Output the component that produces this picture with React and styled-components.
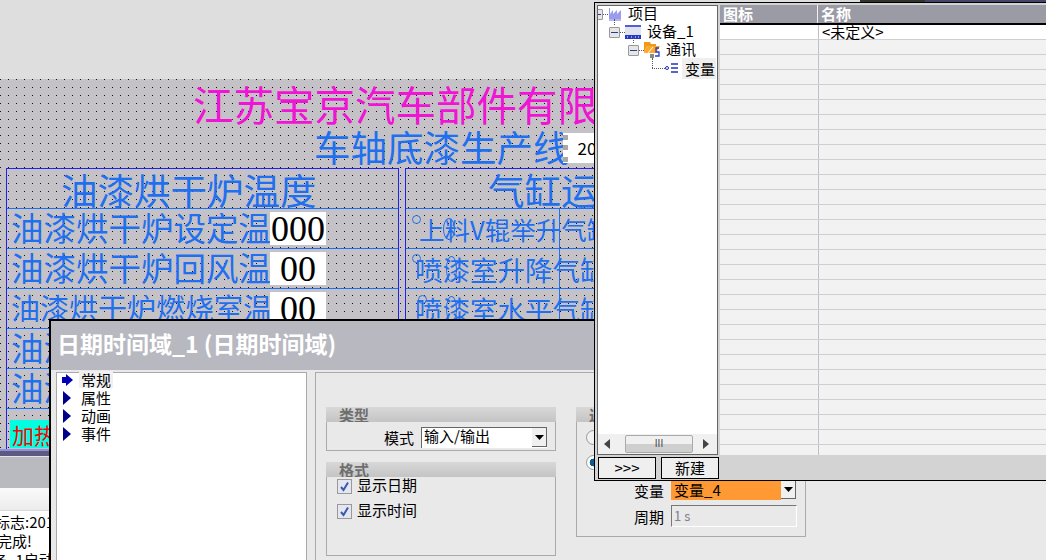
import React from 'react';
import styled, { createGlobalStyle } from 'styled-components';

const GlobalStyle = createGlobalStyle`
  html, body {
    margin: 0;
    padding: 0;
    background: #dedede;
  }
  body {
    font-family: "Noto Sans CJK SC", "Liberation Sans", sans-serif;
  }
`;

const Desktop = styled.div`
  position: relative;
  width: 1046px;
  height: 560px;
  overflow: hidden;
  background: #dedede;
`;

const TopArea = styled.div`
  height: 79px;
  background: #dedede;
`;

/* HMI screen behind the dialogs */
const Canvas = styled.div`
  height: 370px;
  overflow: hidden;
  background-color: #c4c2c6;
  background-image: radial-gradient(circle at 0.5px 0.5px, #111 0.5px, transparent 0.65px);
  background-size: 8px 8px;
`;

const CompanyTitle = styled.div`
  height: 49px;
  padding-left: 193px;
  font-size: 40.5px;
  line-height: 50px;
  color: #f014d4;
  white-space: nowrap;
`;

const LineTitle = styled.div`
  display: flex;
  align-items: center;
  height: 40px;
  padding-left: 314px;
  font-size: 36.5px;
  color: #1f6fee;
  white-space: nowrap;
`;

const LineName = styled.span`
  margin-top: -4px;
`;

const DateBox = styled.div`
  position: relative;
  width: 70px;
  height: 30px;
  margin-left: -7px;
  padding-left: 15px;
  background: #fff;
  color: #000;
  font-size: 17px;
  line-height: 30px;
`;

const Handle = styled.span`
  position: absolute;
  left: 0;
  top: ${(props) => props.top}px;
  width: 5px;
  height: 5px;
  background: #a8a8a8;
`;

const Tables = styled.div`
  display: flex;
  gap: 6px;
  padding-left: 6px;
`;

const HmiTable = styled.div`
  position: relative;
  flex: none;
  width: ${(props) => props.width}px;
  height: 282px;
  border: 1px solid #2222ee;
  border-bottom: none;
`;

const TableHead = styled.div`
  height: 39px;
  padding-left: ${(props) => props.indent}px;
  font-size: 36.5px;
  line-height: 42px;
  color: #1f6fee;
  white-space: nowrap;
  overflow: hidden;
`;

const Row = styled.div`
  position: relative;
  display: flex;
  align-items: center;
  height: 39px;
  border-top: 1px solid #1f6fee;
`;

const RowLabel = styled.div`
  flex: none;
  width: 259px;
  margin-left: 4px;
  overflow: hidden;
  white-space: nowrap;
  font-size: ${(props) => props.size || 32.5}px;
  line-height: 34px;
  height: 38px;
  color: #1f6fee;
`;

const ValueBox = styled.div`
  flex: none;
  width: 56px;
  height: 33px;
  padding-left: ${(props) => props.indent}px;
  box-sizing: border-box;
  background: #fff;
  color: #000;
  font-family: "Liberation Serif", serif;
  font-size: 36px;
  line-height: 35px;
`;

const HeatTag = styled.div`
  width: 60px;
  height: 28px;
  margin: 10px 0 0 3px;
  padding-left: 2px;
  background: #00ffe0;
  color: #ff0000;
  font-size: 22px;
  line-height: 28px;
  white-space: nowrap;
  overflow: hidden;
`;

const CylinderLabel = styled.div`
  margin-left: ${(props) => props.indent}px;
  font-size: ${(props) => props.size}px;
  line-height: 38px;
  color: #1f6fee;
  white-space: nowrap;
`;

const Ring = styled.span`
  position: absolute;
  left: ${(props) => props.left}px;
  top: ${(props) => props.top}px;
  width: ${(props) => props.w}px;
  height: ${(props) => props.h}px;
  box-sizing: border-box;
  border: 1px solid #1f6fee;
  border-radius: 50%;
`;

const ColumnRule = styled.span`
  position: absolute;
  left: 153px;
  top: 39px;
  bottom: 0;
  width: 1px;
  background: #1f6fee;
`;

const OutputEdge = styled.div`
  height: 8px;
  box-sizing: border-box;
  background: #5c5a80;
  border-top: 2px solid #8f92e2;
  border-bottom: 1px solid #e4e4e8;
`;

const OutputHead = styled.div`
  height: 31px;
  background: #b9b9c0;
`;

const OutputTabs = styled.div`
  height: 22px;
  background: linear-gradient(#fafafa, #ececec);
  border-bottom: 1px solid #d8d8d8;
`;

const OutputBody = styled.div`
  padding-top: 1px;
  background: #fff;
`;

const LogLine = styled.div`
  height: 19px;
  margin-left: ${(props) => props.shift}px;
  font-size: 15px;
  line-height: 20px;
  color: #000;
  white-space: nowrap;
`;

/* property dialog */
const Dialog = styled.div`
  position: absolute;
  left: 49px;
  top: 319px;
  width: 1100px;
  height: 300px;
  border: 1px solid #000;
  border-width: 2px 0 0 2px;
  background: #e9e9e9;
`;

const DialogTitle = styled.div`
  height: 49px;
  box-sizing: border-box;
  padding-left: 6px;
  background: #b8b8c0;
  color: #fff;
  font-size: 23px;
  font-weight: 700;
  line-height: 45px;
  white-space: nowrap;
`;

const DialogBody = styled.div`
  display: flex;
  gap: 8px;
  padding: 2px 0 0 5px;
`;

const NavTree = styled.div`
  flex: none;
  width: 251px;
  height: 240px;
  padding: 0 0 0 5px;
  box-sizing: border-box;
  background: #fff;
  border: 1px solid #aaa;
`;

const NavItem = styled.div`
  display: flex;
  align-items: center;
  gap: 5px;
  height: 18px;
  font-size: 15px;
  color: #000;

  &:first-child {
    margin-top: -2px;
  }
`;

const NavText = styled.span`
  padding: 0 2px;
  margin-top: -2px;
  line-height: 17px;
  background: ${(props) => (props.active ? '#f0f0f0' : 'transparent')};
`;

const PropsPanel = styled.div`
  flex: none;
  width: 800px;
  height: 240px;
  box-sizing: border-box;
  padding: 34px 0 0 10px;
  border: 1px solid #aaa;
  display: flex;
  gap: 20px;
`;

const GroupColumn = styled.div`
  display: flex;
  flex-direction: column;
  gap: 11px;
`;

const Group = styled.div`
  width: 230px;
  height: ${(props) => props.height}px;
  box-sizing: border-box;
  border: 1px solid #aaa;
  border-top: none;
`;

const GroupHead = styled.div`
  height: 15px;
  margin: 0 -1px;
  padding-left: 13px;
  background: linear-gradient(#d8d8d8, #c4c4c4);
  color: #6e6e6e;
  font-size: 15px;
  font-weight: 700;
  line-height: 16px;
  overflow: hidden;
`;

const FieldRow = styled.div`
  display: flex;
  align-items: center;
  height: 26px;
  margin-top: ${(props) => props.top || 0}px;
  font-size: 15px;
  color: #000;
`;

const FieldLabel = styled.span`
  width: 94px;
  padding-right: 7px;
  box-sizing: border-box;
  text-align: right;
`;

const RaisedCaption = styled.span`
  margin-top: -4px;
`;

const Combo = styled.div`
  display: flex;
  align-items: center;
  justify-content: space-between;
  width: ${(props) => props.width}px;
  height: 21px;
  box-sizing: border-box;
  padding-left: 2px;
  border-top: 1px solid #666;
  border-left: 1px solid #666;
  background: #fff;
  white-space: nowrap;
`;

const ComboArrow = styled.span`
  display: flex;
  align-items: center;
  justify-content: center;
  width: 15px;
  height: 19px;
  background: #f0f0f0;
  border-right: 1px solid #666;
  border-bottom: 1px solid #666;
  box-sizing: border-box;
`;

const VarField = styled.div`
  display: flex;
  width: 125px;
  height: 20px;
  line-height: 20px;
`;

const VarValue = styled.span`
  width: 110px;
  padding-left: 3px;
  box-sizing: border-box;
  background: #ff9933;
`;

const PeriodField = styled.div`
  width: 126px;
  height: 22px;
  box-sizing: border-box;
  padding-left: 2px;
  border-top: 1px solid #777;
  border-left: 1px solid #777;
  border-bottom: 1px solid #fff;
  border-right: 1px solid #fff;
  color: #80808c;
  font-size: 13px;
  line-height: 20px;
`;

const CheckList = styled.div`
  margin-top: -3px;
`;

const CheckRow = styled.div`
  display: flex;
  align-items: center;
  gap: 5px;
  height: 25px;
  padding-left: 10px;
  font-size: 15px;
`;

const CheckBox = styled.span`
  display: flex;
  align-items: center;
  justify-content: center;
  width: 15px;
  height: 15px;
  box-sizing: border-box;
  border: 1px solid #999;
  background: #e4e6f2;
`;

const RadioBlock = styled.div`
  height: 48px;
  padding: 8px 0 0 9px;
  box-sizing: border-box;
`;

const Radio = styled.span`
  display: block;
  width: 13px;
  height: 13px;
  margin-bottom: 10px;
  border: 1px solid #999;
  border-radius: 50%;
  background: ${(props) => (props.on ? 'radial-gradient(circle, #0b5a94 40%, #fff 45%)' : '#f2f2f2')};
`;

/* variable browser popup */
const Popup = styled.div`
  position: absolute;
  left: 594px;
  top: 2px;
  width: 460px;
  height: 479px;
  box-sizing: border-box;
  padding: 2px 0 0 2px;
  border: 1px solid #000;
  background: #d3d3d3;
  display: grid;
  grid-template-columns: 121px 1fr;
  grid-template-rows: 450px 1fr;
`;

const TreePane = styled.div`
  display: flex;
  flex-direction: column;
  overflow: hidden;
  border: 1px solid #666;
  background: #fff;
  grid-column: 1;
  grid-row: 1;
`;

const TreeList = styled.div`
  flex: 1;
  margin-top: -1px;
`;

const TreeRow = styled.div`
  position: relative;
  display: flex;
  align-items: center;
  gap: 5px;
  height: 18px;
  margin-left: ${(props) => props.indent}px;
  font-size: 15px;
  color: #000;
  white-space: nowrap;
`;

const Connector = styled.span`
  position: absolute;
  left: ${(props) => props.left}px;
  top: ${(props) => props.top}px;
  width: ${(props) => props.w}px;
  height: ${(props) => props.h}px;
  border-left: ${(props) => (props.h ? '1px dotted #555' : 'none')};
  border-bottom: ${(props) => (props.w ? '1px dotted #555' : 'none')};
`;

const Expander = styled.span`
  display: flex;
  align-items: center;
  justify-content: center;
  flex: none;
  width: 9px;
  height: 9px;
  border: 1px solid #999;
  border-radius: 1px;
  background: #e6e6e6;

  &::after {
    content: '';
    width: 7px;
    height: 1px;
    background: #27408b;
  }
`;

const TreeText = styled.span`
  padding: ${(props) => (props.active ? '0 1px 0 3px' : '0 1px')};
  margin-left: ${(props) => (props.active ? '-2px' : '0')};
  margin-top: ${(props) => (props.active ? '0' : '-4px')};
  background: ${(props) => (props.active ? '#efefef' : 'transparent')};
`;

const ScrollBar = styled.div`
  display: flex;
  align-items: center;
  justify-content: space-between;
  height: 20px;
  padding: 0 8px 0 6px;
  background: #f0f0f0;
`;

const ScrollThumb = styled.div`
  width: 68px;
  height: 18px;
  margin-left: 5px;
  box-sizing: border-box;
  border: 1px solid #aaa;
  border-radius: 2px;
  background: linear-gradient(#f0f0f0 50%, #cfcfcf 51%);
  color: #444;
  font-size: 10px;
  line-height: 16px;
  text-align: center;
  font-family: "Liberation Sans", sans-serif;
`;

const VarTable = styled.div`
  grid-column: 2;
  grid-row: 1;
  margin-left: 2px;
  background: #f2f2f2;
  overflow: hidden;
`;

const VarHeadRow = styled.div`
  display: grid;
  grid-template-columns: 98px 1fr;
  height: 20px;
  box-sizing: border-box;
  background: #9b9ba5;
  border-bottom: 2px solid #000;
`;

const VarHeadCell = styled.div`
  padding-left: 3px;
  color: #fff;
  font-size: 15px;
  font-weight: 700;
  line-height: 17px;
  border-right: 1px solid #f0f0f0;
`;

const VarRow = styled.div`
  display: grid;
  grid-template-columns: 98px 1fr;
  height: 15px;
  box-sizing: border-box;
  background: ${(props) => (props.first ? '#fff' : '#f2f2f2')};
  border-bottom: 1px solid #cfcfcf;
`;

const VarCell = styled.div`
  padding-left: 3px;
  font-size: 15px;
  line-height: 14px;
  white-space: nowrap;
  border-left: ${(props) => (props.second ? '1px solid #c0c0cc' : 'none')};
`;

const PopupFooter = styled.div`
  grid-column: 1 / -1;
  grid-row: 2;
  display: flex;
  gap: 5px;
  padding: 2px 0 0 1px;
`;

const PopupButton = styled.button`
  width: 58px;
  height: 22px;
  padding: 0;
  border: 1px solid #000;
  border-radius: 0;
  background: #efefef;
  color: #000;
  font-family: inherit;
  font-size: 15px;
  line-height: 18px;
`;

const TopStrip = styled.div`
  position: absolute;
  left: 860px;
  top: 0;
  display: flex;
  width: 186px;
  height: 2px;
`;

const StripPart = styled.span`
  width: ${(props) => props.width}px;
  background: ${(props) => props.color};
`;

const NavArrow = ({ active }) => (
  <svg width="12" height="14" viewBox="0 0 12 14">
    {active ? (
      <path d="M0 4h4V1l7 6-7 6v-3H0z" fill="#0000b4" />
    ) : (
      <path d="M1 0l8 7-8 7z" fill="#00008b" />
    )}
  </svg>
);

const DropTriangle = () => (
  <svg width="9" height="5" viewBox="0 0 9 5">
    <path d="M0 0h9L4.5 5z" fill="#000" />
  </svg>
);

const CheckMark = () => (
  <svg width="11" height="11" viewBox="0 0 11 11">
    <path d="M2 6l2.5 3L9 1.5" fill="none" stroke="#3c5aa8" strokeWidth="2" />
  </svg>
);

const FactoryIcon = () => (
  <svg width="14" height="14" viewBox="0 0 14 14">
    <path d="M1 1h1v6l3-4v4l4-4v4l4-4v9H1z" fill="#9a9cf0" />
    <path d="M1 13h12" stroke="#6c6ee0" />
  </svg>
);

const DeviceIcon = () => (
  <svg width="16" height="15" viewBox="0 0 16 15">
    <path d="M0 1h16" stroke="#2222cc" strokeWidth="1.5" />
    <rect x="0" y="2" width="16" height="8" fill="#dfe3ee" />
    <rect x="0" y="10" width="16" height="4" fill="#2638c8" />
    <path d="M2 12h1M6 12h1M10 12h1M13 12h1" stroke="#fff" />
  </svg>
);

const FolderIcon = () => (
  <svg width="16" height="16" viewBox="0 0 16 16">
    <path d="M0 0h6l1 2h5v2H3L0 11z" fill="#f09a1a" />
    <path d="M3 4h13l-4 7H0z" fill="#ffa828" />
    <path d="M4 11l5-6" stroke="#fff" />
    <path d="M15 6h-3v4h3v4h-4" fill="none" stroke="#2040d0" strokeWidth="1.3" />
    <rect x="6" y="12" width="4" height="4" fill="#888" />
  </svg>
);

const TagIcon = () => (
  <svg width="14" height="10" viewBox="0 0 14 10">
    <circle cx="2" cy="5" r="1.5" fill="none" stroke="#2030b0" />
    <path d="M6 1h7M6 5h7M6 9h7" stroke="#2030c0" strokeWidth="1.4" />
  </svg>
);

const ScrollArrow = ({ left }) => (
  <svg width="6" height="10" viewBox="0 0 6 10">
    <path d={left ? 'M6 0v10L0 5z' : 'M0 0v10l6-5z'} fill="#444" />
  </svg>
);

const tempRows = [
  { label: '油漆烘干炉设定温度', value: '000', indent: 1 },
  { label: '油漆烘干炉回风温度', value: '00', indent: 10 },
  { label: '油漆烘干炉燃烧室温度', value: '00', indent: 10, size: 29 },
  { label: '油漆烘干炉排风温度' },
  { label: '油漆烘干炉冷却温度' },
];

const cylinderRows = [
  { label: '上料V辊举升气缸', indent: 13, size: 25.5, dot: [6, 6], ring: [37, 9, 12, 22] },
  { label: '喷漆室升降气缸', indent: 9, size: 27.5, dot: [6, 5], ring: [40, 7, 11, 26] },
  { label: '喷漆室水平气缸', indent: 9, size: 27.5, dot: [12, 6], ring: [40, 7, 11, 26] },
];

const varRows = Array.from({ length: 28 }, (_, i) => i);

function App() {
  return (
    <Desktop>
      <GlobalStyle />
      <TopArea />
      <Canvas>
        <CompanyTitle>江苏宝京汽车部件有限公司</CompanyTitle>
        <LineTitle>
          <LineName>车轴底漆生产线</LineName>
          <DateBox>
            20
            <Handle top={2} />
            <Handle top={12} />
            <Handle top={24} />
          </DateBox>
        </LineTitle>
        <Tables>
          <HmiTable width={391}>
            <TableHead indent={54}>油漆烘干炉温度</TableHead>
            {tempRows.map((row) => (
              <Row key={row.label}>
                <RowLabel size={row.size}>{row.label}</RowLabel>
                {row.value && <ValueBox indent={row.indent}>{row.value}</ValueBox>}
              </Row>
            ))}
            <Row>
              <HeatTag>加热启动</HeatTag>
            </Row>
          </HmiTable>
          <HmiTable width={300}>
            <TableHead indent={82}>气缸运行状态</TableHead>
            <ColumnRule />
            {cylinderRows.map((row) => (
              <Row key={row.label}>
                <CylinderLabel indent={row.indent} size={row.size}>{row.label}</CylinderLabel>
                <Ring left={row.dot[0]} top={row.dot[1]} w={9} h={9} />
                <Ring left={row.ring[0]} top={row.ring[1]} w={row.ring[2]} h={row.ring[3]} />
              </Row>
            ))}
          </HmiTable>
        </Tables>
      </Canvas>
      <OutputEdge />
      <OutputHead />
      <OutputTabs />
      <OutputBody>
        <LogLine shift={-5}>标志:2019</LogLine>
        <LogLine shift={-3}>完成!</LogLine>
        <LogLine shift={-8}>务_1启动</LogLine>
      </OutputBody>

      <Dialog>
        <DialogTitle>日期时间域_1 (日期时间域)</DialogTitle>
        <DialogBody>
          <NavTree>
            <NavItem><NavArrow active /><NavText active>常规</NavText></NavItem>
            <NavItem><NavArrow /><NavText>属性</NavText></NavItem>
            <NavItem><NavArrow /><NavText>动画</NavText></NavItem>
            <NavItem><NavArrow /><NavText>事件</NavText></NavItem>
          </NavTree>
          <PropsPanel>
            <GroupColumn>
              <Group height={44}>
                <GroupHead>类型</GroupHead>
                <FieldRow top={2}>
                  <FieldLabel><RaisedCaption>模式</RaisedCaption></FieldLabel>
                  <Combo width={126}>
                    <RaisedCaption>输入/输出</RaisedCaption>
                    <ComboArrow><DropTriangle /></ComboArrow>
                  </Combo>
                </FieldRow>
              </Group>
              <Group height={94}>
                <GroupHead>格式</GroupHead>
                <CheckList>
                  <CheckRow><CheckBox><CheckMark /></CheckBox><RaisedCaption>显示日期</RaisedCaption></CheckRow>
                  <CheckRow><CheckBox><CheckMark /></CheckBox><RaisedCaption>显示时间</RaisedCaption></CheckRow>
                </CheckList>
              </Group>
            </GroupColumn>
            <Group height={130}>
              <GroupHead>过程</GroupHead>
              <RadioBlock>
                <Radio />
                <Radio on />
              </RadioBlock>
              <FieldRow top={7}>
                <FieldLabel>变量</FieldLabel>
                <VarField>
                  <VarValue>变量_4</VarValue>
                  <ComboArrow><DropTriangle /></ComboArrow>
                </VarField>
              </FieldRow>
              <FieldRow>
                <FieldLabel>周期</FieldLabel>
                <PeriodField>1 s</PeriodField>
              </FieldRow>
            </Group>
          </PropsPanel>
        </DialogBody>
      </Dialog>

      <TopStrip>
        <StripPart width={65} color="#33332e" />
        <StripPart width={121} color="#45456a" />
      </TopStrip>

      <Popup>
        <TreePane>
          <TreeList>
            <TreeRow indent={-6}>
              <Connector left={11} top={9} w={5} />
              <Expander /><FactoryIcon /><TreeText>项目</TreeText>
            </TreeRow>
            <TreeRow indent={11}>
              <Connector left={5} top={-4} h={6} />
              <Connector left={11} top={9} w={5} />
              <Expander /><DeviceIcon /><TreeText>设备_1</TreeText>
            </TreeRow>
            <TreeRow indent={30}>
              <Connector left={5} top={-4} h={6} />
              <Connector left={11} top={9} w={5} />
              <Expander /><FolderIcon /><TreeText>通讯</TreeText>
            </TreeRow>
            <TreeRow indent={67}>
              <Connector left={-13} top={-1} h={10} />
              <Connector left={-13} top={9} w={13} />
              <TagIcon /><TreeText active>变量</TreeText>
            </TreeRow>
          </TreeList>
          <ScrollBar>
            <ScrollArrow left />
            <ScrollThumb>III</ScrollThumb>
            <ScrollArrow />
          </ScrollBar>
        </TreePane>
        <VarTable>
          <VarHeadRow>
            <VarHeadCell>图标</VarHeadCell>
            <VarHeadCell>名称</VarHeadCell>
          </VarHeadRow>
          <VarRow first>
            <VarCell />
            <VarCell second>&lt;未定义&gt;</VarCell>
          </VarRow>
          {varRows.map((i) => (
            <VarRow key={i}>
              <VarCell />
              <VarCell second />
            </VarRow>
          ))}
        </VarTable>
        <PopupFooter>
          <PopupButton>&gt;&gt;&gt;</PopupButton>
          <PopupButton>新建</PopupButton>
        </PopupFooter>
      </Popup>
    </Desktop>
  );
}

export default App;
